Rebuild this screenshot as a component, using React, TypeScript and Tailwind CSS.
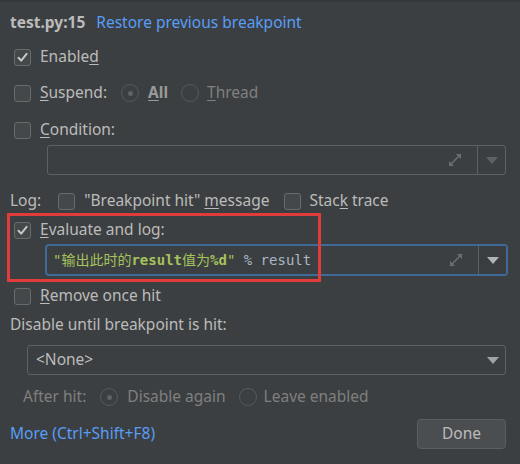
import React from "react";

const font = { fontFamily: '"Noto Sans", "Noto Sans CJK SC", sans-serif' };

function Check({ checked }: { checked?: boolean }) {
  return (
    <div className="w-[17px] h-[17px] rounded-[3px] border border-[#6b6b6b] bg-[#43494a] flex items-center justify-center shrink-0">
      {checked && (
        <svg width="13" height="13" viewBox="0 0 13 13">
          <path d="M2.5 6.8 L5.2 9.6 L10.6 2.8" fill="none" stroke="#c8c8c8" strokeWidth="2" strokeLinecap="round" strokeLinejoin="round" />
        </svg>
      )}
    </div>
  );
}

function Radio({ on }: { on?: boolean }) {
  return (
    <div className="w-[18px] h-[18px] rounded-full border border-[#575a5c] bg-[#3c3f41] flex items-center justify-center shrink-0">
      {on && <div className="w-[5px] h-[5px] rounded-full bg-[#606366]" />}
    </div>
  );
}

function Expand() {
  return (
    <svg width="16" height="16" viewBox="0 0 16 16">
      <path d="M9 2 H14 V7 Z" fill="#6b6e70" />
      <path d="M7 14 H2 V9 Z" fill="#6b6e70" />
      <path d="M12.5 3.5 L3.5 12.5" stroke="#6b6e70" strokeWidth="1.6" />
    </svg>
  );
}

function Arrow({ color = "#8a8d8f" }: { color?: string }) {
  return (
    <svg width="12" height="7" viewBox="0 0 12 7">
      <path d="M0 0 H12 L6 7 Z" fill={color} />
    </svg>
  );
}

export default function App() {
  return (
    <div className="w-[520px] h-[464px] bg-[#3c3f41] text-[#bbbbbb] text-[15.5px] relative overflow-hidden" style={font}>
      <div className="h-[2px] bg-[#353739]" />
      <div className="flex flex-col">
        {/* header */}
        <div className="flex items-center h-[42px] pl-[10px] gap-[11px]">
          <span className="font-bold text-[#bbbbbb]">test.py:15</span>
          <span className="text-[#589df6]">Restore previous breakpoint</span>
        </div>
        {/* Enabled */}
        <div className="flex items-center h-[26px] pl-[14px] gap-[9px]">
          <Check checked />
          <span>Enable<u className="underline-offset-2">d</u></span>
        </div>
        <div className="h-[10px]" />
        {/* Suspend */}
        <div className="flex items-center h-[26px] pl-[14px]">
          <Check />
          <span className="ml-[9px]"><u className="underline-offset-2">S</u>uspend:</span>
          <div className="ml-[14px]"><Radio on /></div>
          <span className="ml-[9px] font-bold text-[#9a9a9a]"><u className="underline-offset-2">A</u>ll</span>
          <div className="ml-[13px]"><Radio /></div>
          <span className="ml-[8px] text-[#808080]"><u className="underline-offset-2">T</u>hread</span>
        </div>
        <div className="h-[11px]" />
        {/* Condition */}
        <div className="flex items-center h-[26px] pl-[14px] gap-[9px]">
          <Check />
          <span><u className="underline-offset-2">C</u>ondition:</span>
        </div>
        <div className="h-[2px]" />
        <div className="ml-[47px] w-[459px] h-[30px] border border-[#5e6163] rounded-[3px] flex">
          <div className="flex-1 flex items-center justify-end pr-[14px]">
            <Expand />
          </div>
          <div className="w-[28px] border-l border-[#5e6163] flex items-center justify-center">
            <Arrow color="#5f6264" />
          </div>
        </div>
        <div className="h-[13px]" />
        {/* Log */}
        <div className="flex items-center h-[26px] pl-[10px]">
          <span>Log:</span>
          <div className="ml-[17px]"><Check /></div>
          <span className="ml-[9px]">"Breakpoint hit" <u className="underline-offset-2">m</u>essage</span>
          <div className="ml-[15px]"><Check /></div>
          <span className="ml-[8px]">Stac<u className="underline-offset-2">k</u> trace</span>
        </div>
        <div className="h-[3px]" />
        {/* Evaluate */}
        <div className="flex items-center h-[26px] pl-[14px] gap-[9px]">
          <Check checked />
          <span><u className="underline-offset-2">E</u>valuate and log:</span>
        </div>
        <div className="h-[1px]" />
        <div className="ml-[45px] w-[463px] h-[32px] border-2 border-[#3d6a96] rounded-[4px] flex bg-[#3c3f41]">
          <div className="flex-1 flex items-center pl-[6px] pr-[14px] justify-between">
            <span
              className="text-[14px] whitespace-pre"
              style={{ fontFamily: '"DejaVu Sans Mono", "Noto Sans CJK SC", monospace' }}
            >
              <span className="text-[#a5c25c]">"输出此时的</span>
              <span className="text-[#a5c25c] font-semibold">result</span>
              <span className="text-[#a5c25c]">值为</span>
              <span className="text-[#a5c25c] font-semibold">%d</span>
              <span className="text-[#a5c25c]">"</span>
              <span className="text-[#a9b7c6]"> % result</span>
            </span>
            <Expand />
          </div>
          <div className="w-[28px] border-l border-[#5e6163] bg-[#3a3d3f] flex items-center justify-center">
            <Arrow color="#b0b3b5" />
          </div>
        </div>
        <div className="h-[7px]" />
        {/* Remove once hit */}
        <div className="flex items-center h-[26px] pl-[14px] gap-[9px]">
          <Check />
          <span><u className="underline-offset-2">R</u>emove once hit</span>
        </div>
        <div className="h-[3px]" />
        <div className="flex items-center h-[26px] pl-[10px]">
          <span>Disable until breakpoint is hit:</span>
        </div>
        <div className="h-[7px]" />
        <div className="ml-[27px] w-[479px] h-[30px] border border-[#5e6163] rounded-[3px] flex items-center justify-between pl-[8px] pr-[6px]">
          <span>&lt;None&gt;</span>
          <Arrow color="#a0a3a5" />
        </div>
        <div className="h-[8px]" />
        {/* After hit */}
        <div className="flex items-center h-[28px] pl-[23px] text-[#7f7f7f]">
          <span>After hit:</span>
          <div className="ml-[14px]"><Radio on /></div>
          <span className="ml-[9px]">Disable again</span>
          <div className="ml-[13px]"><Radio /></div>
          <span className="ml-[7px]">Leave enabled</span>
        </div>
        <div className="h-[8px]" />
        <div className="flex items-center justify-between pl-[10px] pr-[14px] h-[30px]">
          <span className="text-[#589df6]">More (Ctrl+Shift+F8)</span>
          <div className="w-[89px] h-[30px] rounded-[4px] border border-[#5a5e60] bg-[#4a4e50] flex items-center justify-center text-[#bbbbbb]">
            Done
          </div>
        </div>
      </div>
      {/* red annotation rectangle */}
      <div className="absolute left-[7px] top-[213px] w-[314px] h-[69px] border-[3px] border-[#e03c3c] pointer-events-none" />
    </div>
  );
}
